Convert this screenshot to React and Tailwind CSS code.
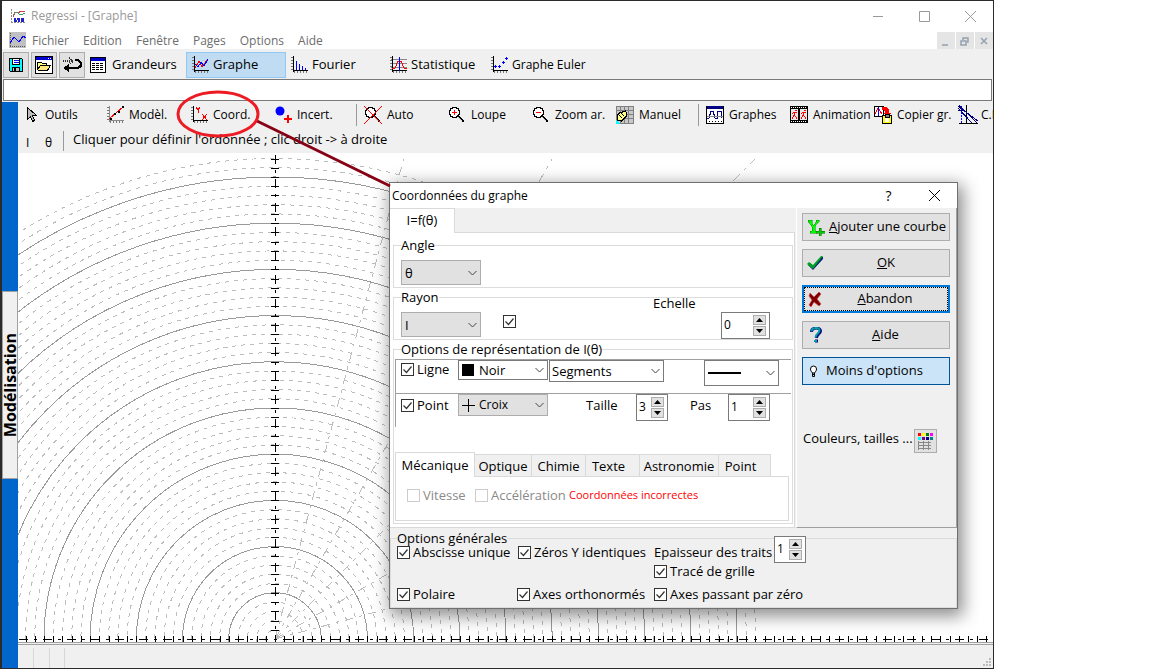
import React, { useState } from 'react';

const STEP = 9.24;

const Icon = ({ w = 18, h = 18, children }) => (
    <svg width={w} height={h} viewBox={`0 0 ${w} ${h}`} fill="none" shapeRendering="crispEdges" className="shrink-0" aria-hidden="true">
        {children}
    </svg>
);

// Graduated axes shared by most of the toolbar icons
const Axes = ({ color = '#000' }) => (
    <>
        <path d="M3.5 0V16M3 14.5H18" stroke={color} />
        <path d="M2 1v14" stroke="#777" strokeDasharray="1 2" strokeWidth="2" />
        <path d="M4 16h14" stroke="#777" strokeDasharray="1 2" strokeWidth="2" />
    </>
);

const AppIcon = () => (
    <Icon w={16} h={16}>
        <path d="M1.5 1v14M1 14.5h14" stroke="#888" strokeDasharray="2 1" />
        <path d="M3 9l2-5 3 1 3-2 4 0" stroke="#c44" />
        <path d="M3 7l3-3 5 3 4-2" stroke="#496" />
        <path d="M4 10.500h2m1 0h3m1 0h3M4 12.500h3m1 0h2m1 0h3" stroke="#22c" strokeWidth="2" />
    </Icon>
);

const ChildIcon = () => (
    <Icon w={17} h={16}>
        <path d="M0 0h17v16H0z" fill="#c0c0c0" />
        <path d="M1.5 1v14M1 14.5h15" stroke="#555" strokeDasharray="1 1" />
        <path d="M1 11l4-6 5 5 4-6 3 2" stroke="#00f" />
    </Icon>
);

const SaveIcon = () => (
    <Icon w={16} h={16}>
        <path d="M1.500 1.500h12l1 1v12h-12l-1-1z" fill="#0ff" stroke="#000" />
        <path d="M4.500 1.500h7v6h-7z" fill="#fff" stroke="#000" />
        <path d="M6 3.500h5M6 5.500h5" stroke="#00f" />
        <path d="M4.500 10.500h7v4h-7z" fill="#c0c0c0" stroke="#000" />
        <path d="M6 11h2v3H6z" fill="#000" />
    </Icon>
);

const OpenIcon = () => (
    <Icon>
        <path d="M.5.5h17v17H.5z" fill="#fff" stroke="#000" />
        <path d="M1 1h16v3H1z" fill="#00c" />
        <path d="M13 2.500h1m1 0h1" stroke="#fff" />
        <path d="M2.500 13.500v-7h4l1 1h4v3" fill="#ff8" stroke="#000" />
        <path d="M2.500 13.500l3-4h10l-3 5h-9z" fill="#ffe97a" stroke="#000" />
    </Icon>
);

const UndoIcon = () => (
    <Icon w={19} h={16}>
        <path d="M0 3.500h10M6 1l4 3-4 3" stroke="#333" strokeWidth="2" strokeDasharray="1 1" />
        <path d="M12 3h3l3 3v3l-3 2H4" stroke="#000" strokeWidth="2.500" />
        <path d="M0 11l6-4v8z" fill="#000" />
    </Icon>
);

const TableIcon = () => (
    <Icon w={16} h={16}>
        <path d="M.5.5h15v15H.5z" fill="#fff" stroke="#000" />
        <path d="M1 1h14v3H1z" fill="#00c" />
        <path d="M2 6.500h12M2 8.500h12M2 10.500h12M2 12.500h12" stroke="#000" strokeDasharray="3 1" />
    </Icon>
);

const GraphIcon = () => (
    <Icon>
        <Axes />
        <path d="M4 12l4-7 3 6 6-8" stroke="#f00" />
        <path d="M4 8l3 3 3-5 3 4 4-7" stroke="#00f" />
    </Icon>
);

const FourierIcon = () => (
    <Icon>
        <Axes />
        <path d="M6.500 5v9M9.500 8v6M12.500 10v4M15.500 12v2" stroke="#00f" />
    </Icon>
);

const StatIcon = () => (
    <Icon>
        <path d="M2 3.500h16M2 7.500h16M2 11.500h16" stroke="#888" />
        <Axes />
        <path d="M3 13l3-1 3-7h3l3 7 3 1" stroke="#f00" />
        <path d="M10.500 1v14" stroke="#00f" />
    </Icon>
);

const EulerIcon = () => (
    <Icon>
        <Axes />
        <path d="M4 10.500h3M5.500 9v3M8 10.500h3M9.500 9v3M12 6.500h3M13.500 5v3M15 2.500h3M16.500 1v3" stroke="#00f" />
    </Icon>
);

const PointerIcon = () => (
    <Icon>
        <path d="M5.500 1.500v12l3-3 2 5 2-1-2-5h4z" fill="#bbb" stroke="#000" />
    </Icon>
);

const ModelIcon = () => (
    <Icon w={19}>
        <Axes color="#888" />
        <path d="M3 13L17 1" stroke="#f00" />
        <path d="M4 12h2v2H4zM8 7h2v2H8zM12 5h2v2h-2zM16 0h2v2h-2z" fill="#000" />
    </Icon>
);

const CoordIcon = () => (
    <Icon w={19}>
        <Axes />
        <path d="M6 1l2 3 2-3M8.500 4v3M12 8l5 6M17 8l-5 6" stroke="#f00" />
    </Icon>
);

const IncertIcon = () => (
    <Icon w={19} h={20}>
        <circle cx="6" cy="6" r="4.500" fill="#00f" shapeRendering="auto" />
        <path d="M10 14h8M14 10v8" stroke="#f00" strokeWidth="2" />
    </Icon>
);

const Lens = () => (
    <>
        <circle cx="6.500" cy="6.500" r="5" fill="#fff" stroke="#000" strokeWidth="1.500" />
        <path d="M10 10l6 6" stroke="#000" strokeWidth="2.500" />
        <path d="M10 11l4 4" stroke="#ccc" />
    </>
);

const AutoIcon = () => (
    <Icon>
        <Lens />
        <path d="M0 0l18 18M18 0L0 18" stroke="#f00" />
    </Icon>
);

const ZoomInIcon = () => (
    <Icon>
        <Lens />
        <path d="M4 6.500h5M6.500 4v5" stroke="#f00" />
    </Icon>
);

const ZoomOutIcon = () => (
    <Icon>
        <Lens />
        <path d="M4 6.500h5" stroke="#f00" />
    </Icon>
);

const ManualIcon = () => (
    <Icon>
        <path d="M0 0h18v18H0z" fill="#c8c8c8" />
        <path d="M.5 0v18M4.500 0v18M8.500 0v18M12.500 0v18M17.500 0v18M0 .5h18M0 4.500h18M0 8.500h18M0 12.500h18M0 17.500h18" stroke="#808080" />
        <path d="M1.500 14V9l3-3h2l3-1 1 2v3l-5 5z" fill="#ff8" stroke="#000" />
        <path d="M3 9l3 3M5 7l3 3" stroke="#000" />
        <path d="M0 18v-4l4 4z" fill="#0ff" />
    </Icon>
);

const GraphsIcon = () => (
    <Icon>
        <path d="M.5.5h17v17H.5z" fill="#fff" stroke="#000" />
        <path d="M1 0h16v3H1z" fill="#000080" />
        <path d="M1 12h2l2-7h2l2 7h2V5.500h4V12" stroke="#000080" />
        <path d="M1 10.500h16" stroke="#888" />
        <path d="M3 15.500h13" stroke="#000" strokeDasharray="1 2" />
    </Icon>
);

const FilmIcon = () => (
    <Icon>
        <path d="M0 0h18v17H0z" fill="#000" />
        <path d="M1 1.500h16M1 15.500h16" stroke="#fff" strokeDasharray="1 1" />
        <path d="M1 3h7v11H1zM10 3h7v11h-7z" fill="#e8e8e8" />
        <path d="M5 4h2M2 8l2-2h3M5 6l-1 3 2 2v2M4 9l-2 4M14 4h2M11 8l2-2h3M14 6l-1 3 2 2v2M13 9l-2 4" stroke="#f00" />
    </Icon>
);

const CopyGraphIcon = () => (
    <Icon>
        <path d="M.5.5h9v10h-9z" fill="#fff" stroke="#000" />
        <path d="M1 8l3-6 4 6" stroke="#f00" />
        <path d="M4.500 1v9" stroke="#00f" />
        <path d="M8 1h4l3 3v3h3l-5 4-4-4h2V5L8 4z" fill="#f00" />
        <path d="M8.500 9.500h9v8h-9z" fill="#ff0" stroke="#000" />
        <path d="M11 8h4v3h-4z" fill="#888" stroke="#000" />
        <path d="M11 12h4v4h-4z" fill="#fff" />
    </Icon>
);

const RaysIcon = () => (
    <Icon w={20} h={20}>
        <path d="M3.500 1v17" stroke="#00f" strokeDasharray="2 1" />
        <path d="M8.500 0v18M1 18.500h19" stroke="#000" />
        <path d="M0 1l20 15M0 3l14 15M1 0l18 18M0 5h7" stroke="#000080" />
    </Icon>
);

const fileButtons = [
    { label: 'Enregistrer', icon: <SaveIcon /> },
    { label: 'Ouvrir', icon: <OpenIcon /> },
    { label: 'Annuler', icon: <UndoIcon /> },
];

const graphTools = [
    [
        { label: 'Outils', icon: <PointerIcon /> },
        { label: 'Modèl.', icon: <ModelIcon /> },
        { label: 'Coord.', icon: <CoordIcon /> },
        { label: 'Incert.', icon: <IncertIcon /> },
    ],
    [
        { label: 'Auto', icon: <AutoIcon /> },
        { label: 'Loupe', icon: <ZoomInIcon /> },
        { label: 'Zoom ar.', icon: <ZoomOutIcon /> },
        { label: 'Manuel', icon: <ManualIcon /> },
    ],
    [
        { label: 'Graphes', icon: <GraphsIcon /> },
        { label: 'Animation', icon: <FilmIcon /> },
        { label: 'Copier gr.', icon: <CopyGraphIcon /> },
        { label: 'C.I', icon: <RaysIcon /> },
    ],
];

const TitleBar = () => (
    <header className="flex h-[30px] items-center pl-2 text-xs text-[#999]">
        <AppIcon />
        <h1 className="ml-[5px]">Regressi - [Graphe]</h1>
        <div className="ml-auto flex items-center">
            {[
                ['Réduire', 'M0 5.500h10'],
                ['Agrandir', 'M.5.5h10v10H.5z'],
                ['Fermer', 'M0 0l11 11M11 0L0 11'],
            ].map(([label, d]) => (
                <button key={label} aria-label={label} className="flex w-[46px] justify-center">
                    <svg width="11" height="11" viewBox="0 0 11 11" fill="none" stroke="#999"><path d={d} /></svg>
                </button>
            ))}
        </div>
    </header>
);

const MenuBar = () => (
    <nav className="flex h-[18px] items-center pl-[7px] text-xs text-[#6d6d6d]">
        <ChildIcon />
        <div className="ml-1.5 flex gap-3.5 pt-0.5">
            {['Fichier', 'Edition', 'Fenêtre', 'Pages', 'Options', 'Aide'].map((m) => (
                <button key={m}>{m}</button>
            ))}
        </div>
        <div className="ml-auto flex gap-px pt-0.5">
            {[
                ['Réduire le graphe', 'M1 9h6'],
                ['Restaurer le graphe', 'M1 5h5v4H1zM3 4V2h5v4H7'],
                ['Fermer le graphe', 'M2 2l6 6M8 2L2 8'],
            ].map(([label, d]) => (
                <button key={label} aria-label={label} className="flex h-[18px] w-[18px] items-center justify-center bg-[#e5e5e5]">
                    <svg width="10" height="10" viewBox="0 0 10 10" fill="none" stroke="#93a1b0" strokeWidth="1.500"><path d={d} /></svg>
                </button>
            ))}
        </div>
    </nav>
);

const MainToolbar = () => (
    <div className="flex h-[30px] items-center bg-[#f0f0f0] pt-0.5 pl-px text-[13px]">
        <div className="flex gap-0.5">
            {fileButtons.map((b) => (
                <button key={b.label} aria-label={b.label} className="flex h-[26px] w-[26px] items-center justify-center border border-[#adadad] bg-[#e1e1e1]">
                    {b.icon}
                </button>
            ))}
        </div>
        <button className="ml-[5px] flex w-24 items-center gap-1.5"><TableIcon />Grandeurs</button>
        <button className="flex h-[26px] w-[100px] items-center gap-1 border border-[#90c8f6] bg-[#c0dcf3] pl-1"><GraphIcon />Graphe</button>
        <button className="ml-1 flex w-[99px] items-center gap-1"><FourierIcon />Fourier</button>
        <button className="flex w-[101px] items-center gap-1"><StatIcon />Statistique</button>
        <button className="flex items-center gap-1 text-xs"><EulerIcon />Graphe Euler</button>
    </div>
);

const GraphToolbar = () => (
    <div className="bg-[#f0f0f0]">
        <div className="flex h-[26px] items-center overflow-hidden pl-1 text-xs">
            {graphTools.map((group, i) => (
                <div key={i} className={i ? 'flex items-center border-l border-[#999] pl-[7px] -ml-0.5 h-[22px]' : 'flex items-center'}>
                    {group.map((t) => (
                        <button key={t.label} className="flex w-[84px] shrink-0 items-center whitespace-nowrap">
                            <span className="flex w-[23px]">{t.icon}</span>
                            {t.label}
                        </button>
                    ))}
                </div>
            ))}
        </div>
        <div className="flex h-[25px] items-center pl-2 text-[13px]">
            <span className="w-[19px] pt-1 text-xs">I</span>
            <span className="w-[18px] pt-1 text-xs">θ</span>
            <p className="border-l border-[#999] pb-1 pl-[9px] leading-4">Cliquer pour définir l'ordonnée ; clic droit -&gt; à droite</p>
        </div>
    </div>
);

const cx = 257;
const cy = 486;
const rings = Array.from({ length: 52 }, (_, i) => i + 1);
const xTicks = Array.from({ length: 105 }, (_, i) => i - 27);

const PolarGraph = () => (
    <svg className="block min-h-0 w-full flex-1" fill="none" shapeRendering="crispEdges" role="img" aria-label="Graphe polaire">
        {rings.map((n) => (
            <circle
                key={n}
                cx={cx}
                cy={cy}
                r={n * STEP}
                stroke={n % 5 ? '#bdbdbd' : '#9a9a9a'}
                strokeDasharray={n % 5 ? '4 5' : undefined}
            />
        ))}
        {[15, 30, 45, 60, 75].map((a) => {
            const t = (a * Math.PI) / 180;
            const len = 480 / Math.max(Math.sin(t), Math.cos(t));
            return <line key={a} x1={cx} y1={cy} x2={cx + len * Math.sin(t)} y2={cy - len * Math.cos(t)} stroke="#bdbdbd" strokeDasharray="9 6 3 6" />;
        })}
        <path d="M257.500 2v484M1 486.500h974" stroke="#000" strokeDasharray="9 6 3 6" />
        {rings.map((n) => (
            <path key={n} d={`M253 ${Math.round(cy - n * STEP)}.5h8`} stroke="#000" />
        ))}
        {xTicks.map((n) => (
            <path key={n} d={`M${Math.round(cx + n * STEP)}.5 483v7`} stroke="#000" />
        ))}
    </svg>
);

const Check = ({ label, defaultChecked, disabled, className = '' }) => (
    <label className={`flex items-center gap-[3px] leading-4 whitespace-nowrap ${disabled ? 'text-[#8a8a8a]' : ''} ${className}`}>
        <span className="relative h-[13px] w-[13px] shrink-0">
            <input
                type="checkbox"
                defaultChecked={defaultChecked}
                disabled={disabled}
                aria-label={label || 'Echelle automatique'}
                className="peer block h-[13px] w-[13px] appearance-none border border-[#333] bg-white disabled:border-[#ccc]"
            />
            <svg className="pointer-events-none absolute inset-0 hidden peer-checked:block" width="13" height="13" viewBox="0 0 13 13" fill="none" stroke="#333" strokeWidth="1.200">
                <path d="M2.500 6.500l3 3 5-6" />
            </svg>
        </span>
        {label}
    </label>
);

const Select = ({ label, options, pad = 'pl-[3px]', className = '', children }) => (
    <div className={`relative ${className}`}>
        <select aria-label={label} className={`block h-full w-full appearance-none border border-inherit bg-inherit leading-4 ${pad}`}>
            {options.map((o) => <option key={o}>{o}</option>)}
        </select>
        <span className="pointer-events-none absolute inset-y-0 left-1 flex items-center">{children}</span>
        <svg className="pointer-events-none absolute top-1/2 right-1 -mt-1" width="9" height="8" viewBox="0 0 9 8" fill="none" stroke="#444">
            <path d="M.5 2l4 4 4-4" />
        </svg>
    </div>
);

const Spinner = ({ label, start, className = '' }) => {
    const [value, setValue] = useState(start);

    return (
        <div className={`flex h-[27px] items-center border border-[#7a7a7a] bg-white pr-[3px] ${className}`}>
            <input
                aria-label={label}
                value={value}
                onChange={(e) => setValue(Number(e.target.value) || 0)}
                className="min-w-0 flex-1 pb-0.5 pl-0.5 text-xs outline-none"
            />
            <div className="flex flex-col gap-px">
                <button aria-label={`${label} plus`} onClick={() => setValue(value + 1)} className="flex h-2.5 w-[13px] items-center justify-center border border-[#adadad] bg-[#e1e1e1]">
                    <svg width="7" height="4" viewBox="0 0 7 4"><path d="M0 4h7L3.500 0z" /></svg>
                </button>
                <button aria-label={`${label} moins`} onClick={() => setValue(value - 1)} className="flex h-2.5 w-[13px] items-center justify-center border border-[#adadad] bg-[#e1e1e1]">
                    <svg width="7" height="4" viewBox="0 0 7 4"><path d="M0 0h7L3.500 4z" /></svg>
                </button>
            </div>
        </div>
    );
};

const CurveOptions = () => (
    <div className="flex min-w-0 flex-1 flex-col">
        <div className="flex h-[25px] pr-px">
            <button className="w-[65px] border-t border-r border-[#d9d9d9] bg-white">I=f(θ)</button>
            <div className="flex-1 border-b border-[#d9d9d9]" />
        </div>
        <div className="mr-px flex flex-1 flex-col gap-px border-r border-b border-[#d9d9d9] bg-white pt-1 pr-px pb-[3px] pl-[3px]">
            <fieldset className="h-[51px] min-w-0 border border-[#dcdcdc] px-[7px]">
                <legend className="h-4 leading-4">Angle</legend>
                <Select label="Angle" options={['θ', 'I']} className="mt-[7px] h-[25px] w-20 border-[#adadad] bg-[#e1e1e1]" />
            </fieldset>
            <fieldset className="h-[51px] min-w-0 border border-[#dcdcdc] px-[7px]">
                <legend className="h-4 leading-4">Rayon</legend>
                <div className="flex items-start">
                    <Select label="Rayon" options={['I', 'θ']} className="mt-[7px] h-[25px] w-20 border-[#adadad] bg-[#e1e1e1]" />
                    <Check defaultChecked className="mt-2.5 ml-[22px]" />
                    <span className="-mt-2.5 ml-auto w-[68px] leading-4">Echelle</span>
                    <Spinner label="Echelle" start={0} className="mt-[7px] mr-[15px] w-[49px]" />
                </div>
            </fieldset>
            <fieldset className="min-w-0 flex-1 border border-[#dcdcdc] px-px">
                <legend className="ml-1.5 h-4 leading-4">Options de représentation de I(θ)</legend>
                <div className="mt-0.5 border-l border-[#a0a0a0]">
                    <div className="flex h-[34px] items-start border-t border-[#a0a0a0] pl-[5px]">
                        <Check label="Ligne" defaultChecked className="mt-px w-[57px]" />
                        <Select label="Couleur" options={['Noir', 'Rouge', 'Bleu']} pad="pl-5" className="h-5 w-[90px] border-[#7a7a7a] bg-white">
                            <span className="h-3 w-3 bg-black" />
                        </Select>
                        <Select label="Type de ligne" options={['Segments', 'Splines']} pad="pl-0.5" className="ml-px h-[22px] w-[115px] border-[#7a7a7a] bg-white" />
                        <Select label="Trait" options={[' ']} className="mr-3 ml-auto h-[26px] w-[75px] border-[#7a7a7a] bg-white">
                            <span className="h-0.5 w-[33px] bg-black" />
                        </Select>
                    </div>
                    <div className="flex h-[34px] items-start border-t border-[#a0a0a0] pl-[5px]">
                        <Check label="Point" defaultChecked className="mt-[3px] w-[57px]" />
                        <Select label="Motif" options={['Croix', 'Cercle']} pad="pl-5" className="h-[22px] w-[90px] border-[#adadad] bg-[#e1e1e1] text-xs">
                            <svg width="13" height="13" viewBox="0 0 13 13" stroke="#000"><path d="M6.500 0v13M0 6.500h13" /></svg>
                        </Select>
                        <span className="mt-[3px] ml-auto w-[50px] leading-4">Taille</span>
                        <Spinner label="Taille" start={3} className="w-8" />
                        <span className="mt-[3px] ml-[22px] w-[38px] leading-4">Pas</span>
                        <Spinner label="Pas" start={1} className="mr-[21px] w-[42px]" />
                    </div>
                </div>
                <div className="mt-[25px] flex items-end leading-4" role="tablist">
                    <button role="tab" aria-selected="true" className="-mb-px h-[25px] w-20 border border-b-0 border-[#d9d9d9] bg-white">Mécanique</button>
                    <button role="tab" className="h-[22px] w-[57px] border-t border-r border-[#d9d9d9] bg-[#f0f0f0]">Optique</button>
                    <button role="tab" className="h-[22px] w-[54px] border-t border-r border-[#d9d9d9] bg-[#f0f0f0]">Chimie</button>
                    <button role="tab" className="h-[22px] w-[54px] border-t border-r border-[#d9d9d9] bg-[#f0f0f0] pr-2">Texte</button>
                    <button role="tab" className="h-[22px] w-[79px] border-t border-r border-[#d9d9d9] bg-[#f0f0f0]">Astronomie</button>
                    <button role="tab" className="h-[22px] w-[52px] border-t border-r border-[#d9d9d9] bg-[#f0f0f0] pr-2">Point</button>
                </div>
                <div className="mr-0.5 flex h-[45px] items-start border border-[#d9d9d9] pt-[10px] pl-[11px]">
                    <Check label="Vitesse" disabled className="w-[68px]" />
                    <Check label="Accélération" disabled className="w-[94px]" />
                    <p className="text-[11px] leading-4 whitespace-nowrap text-[#ff0000]">Coordonnées incorrectes</p>
                </div>
            </fieldset>
        </div>
    </div>
);

const sideButton = 'relative flex h-7 w-full items-center justify-center border border-[#adadad] bg-[#e1e1e1]';

const Actions = () => (
    <div className="flex w-[161px] flex-col gap-2 border-r border-b border-l border-[#a0a0a0] border-l-white pt-[5px] pr-1.5 pl-[5px]">
        <button className={`${sideButton} gap-1 pl-px whitespace-nowrap`}>
            <svg width="18" height="17" viewBox="0 0 18 17" shapeRendering="crispEdges" aria-hidden="true">
                <path d="M1 1h4v2l1 3h1l2-3V1h3v2h-1L8 8v4h2v2H3v-2h2V8L2 3H1z" fill="#0f0" stroke="#080" strokeWidth=".5" />
                <path d="M12 9h2v3h4v2h-4v3h-2v-3H9v-2h3z" fill="#0c0" stroke="#060" strokeWidth=".5" />
            </svg>
            <span><u>A</u>jouter une courbe</span>
        </button>
        <button className={`${sideButton} pl-5`}>
            <svg className="absolute left-1" width="17" height="15" viewBox="0 0 17 15" aria-hidden="true">
                <path d="M1 9l2-2 3 3 8-9 2 0v2L6 14z" fill="#0a1a80" />
                <path d="M0 8l2-2 4 3 8-9h2L6 13z" fill="#00a020" />
            </svg>
            <span><u>O</u>K</span>
        </button>
        <button className="relative flex h-7 w-full items-center justify-center border-2 border-[#0078d7] bg-[#e1e1e1] pl-[18px] outline-1 -outline-offset-3 outline-dotted outline-black">
            <svg className="absolute left-1" width="15" height="15" viewBox="0 0 15 15" aria-hidden="true">
                <path d="M2 1l4 4 5-5 2 2-4 5 4 5-2 2-5-4-3 5-2-2 3-5-3-4z" fill="#800000" stroke="#c44" strokeWidth=".6" />
            </svg>
            <span><u>A</u>bandon</span>
        </button>
        <button className={`${sideButton} pl-[19px]`}>
            <svg className="absolute left-[7px]" width="12" height="16" viewBox="0 0 12 16" fill="none" aria-hidden="true">
                <path d="M1.500 5c0-5 9-5 9-1 0 3-4 3-4 7M5 14h3" stroke="#000080" strokeWidth="3" />
                <path d="M1.500 4.500c0-4 8-5 8-1 0 3-4 3-4 7M4 14h3" stroke="#00a0a8" strokeWidth="2" />
            </svg>
            <span><u>A</u>ide</span>
        </button>
        <button className="flex h-7 w-full items-center gap-2 border border-[#005499] bg-[#cce4f7] pl-1.5">
            <svg width="9" height="13" viewBox="0 0 9 13" fill="none" stroke="#000" aria-hidden="true">
                <path d="M3.500 8C2 6 1.500 5.500 1.500 4a3 3 0 0 1 6 0c0 1.500-.5 2-2 4z" fill="#fff" />
                <path d="M3.500 8v3.500h2V8M3 9.500h3" />
            </svg>
            Moins d'options
        </button>
        <div className="mt-9 flex items-center whitespace-nowrap">
            <span className="w-28 pb-1.5 pl-px leading-4">Couleurs, tailles ...</span>
            <button aria-label="Couleurs" className="flex h-6 w-[23px] items-center justify-center border border-[#adadad] bg-[#e1e1e1]">
                <Icon w={16}>
                    <path d="M0 1h3v3H0z" fill="#f00" /><path d="M4 1h3v3H4z" fill="#ff0" />
                    <path d="M8 1h3v3H8z" fill="#008000" /><path d="M12 1h3v3h-3z" fill="#f0f" />
                    <path d="M0 5h3v3H0z" fill="#0ff" /><path d="M4 5h3v3H4z" fill="#800080" />
                    <path d="M8 5h3v3H8z" fill="#000080" /><path d="M12 5h3v3h-3z" fill="#008080" />
                    <path d="M.5 9v9M5.500 9v9M10.500 9v9M0 10.500h13M0 13.500h13M0 16.500h13" stroke="#888" />
                </Icon>
            </button>
        </div>
    </div>
);

const GeneralOptions = () => (
    <fieldset className="mt-0.5 h-[78px] min-w-0 border border-[#dcdcdc] pr-2 pl-1.5">
        <legend className="h-4 leading-4">Options générales</legend>
        <div className="-mt-0.5 grid grid-cols-[121px_136px_120px_auto] items-start">
            <Check label="Abscisse unique" defaultChecked />
            <Check label="Zéros Y identiques" defaultChecked />
            <span className="leading-4 whitespace-nowrap">Epaisseur des traits</span>
            <Spinner label="Epaisseur des traits" start={1} className="-mt-2 w-8" />
            <Check label="Tracé de grille" defaultChecked className="col-start-3" />
        </div>
        <div className="mt-[7px] grid grid-cols-[120px_137px_auto]">
            <Check label="Polaire" defaultChecked />
            <Check label="Axes orthonormés" defaultChecked />
            <Check label="Axes passant par zéro" defaultChecked />
        </div>
    </fieldset>
);

const CoordinatesDialog = () => (
    <section role="dialog" aria-label="Coordonnées du graphe" className="absolute top-[182px] left-[389px] flex w-[569px] flex-col border border-[#707070] bg-[#f0f0f0] text-[13px] text-black shadow-[3px_5px_16px_2px_rgba(0,0,0,0.45)]">
        <header className="flex h-[25px] items-center bg-white pl-0.5">
            <h2 className="text-xs">Coordonnées du graphe</h2>
            <button aria-label="Aide contextuelle" className="ml-auto w-[45px] text-sm">?</button>
            <button aria-label="Fermer" className="flex w-[46px] justify-center">
                <svg width="11" height="11" viewBox="0 0 11 11" stroke="#000"><path d="M0 0l11 11M11 0L0 11" /></svg>
            </button>
        </header>
        <div className="flex h-80">
            <CurveOptions />
            <Actions />
        </div>
        <GeneralOptions />
    </section>
);

const App = () => (
    <div className="relative h-screen bg-white pr-[158px] font-['Open_Sans','Noto_Sans',sans-serif] text-black">
        <main className="flex h-full flex-col border border-l-2 border-[#2b2b2b] bg-white">
            <TitleBar />
            <MenuBar />
            <MainToolbar />
            <div className="bg-[#f0f0f0] px-px pb-px">
                <input aria-label="Expression" className="block h-[22px] w-full border border-[#7a7a7a] bg-white px-1 text-xs outline-none" />
            </div>
            <div className="flex min-h-0 flex-1">
                <aside className="w-4 shrink-0 bg-[#0066cc] pt-[189px]">
                    <button className="flex h-[188px] w-4 items-center justify-center border border-[#a0a0a0] bg-[#f0f0f0]">
                        <span className="rotate-180 text-base leading-4 font-bold [writing-mode:vertical-rl]">Modélisation</span>
                    </button>
                </aside>
                <div className="flex min-w-0 flex-1 flex-col">
                    <GraphToolbar />
                    <PolarGraph />
                    <footer className="flex h-[26px] shrink-0 items-end border-t border-[#a0a0a0] bg-[#f0f0f0]">
                        <div className="flex h-6 w-full items-end border-t border-[#a0a0a0] pl-[15px]">
                            <span className="h-5 w-4 border-l border-[#d7d7d7]" />
                            <span className="h-5 w-4 border-x border-[#d7d7d7]" />
                            <svg className="ml-auto" width="10" height="10" viewBox="0 0 10 10" fill="#bbb"><path d="M6 0h2v2H6zM3 3h2v2H3zM6 3h2v2H6zM0 6h2v2H0zM3 6h2v2H3zM6 6h2v2H6z" /></svg>
                        </div>
                    </footer>
                </div>
            </div>
        </main>
        <CoordinatesDialog />
        {/* hand-drawn pointer from the Coord. button to its dialog */}
        <svg className="pointer-events-none absolute top-0 left-0" width="400" height="200" fill="none" strokeWidth="3" aria-hidden="true">
            <path d="M257 121l133 65" stroke="#880015" />
            <ellipse cx="218" cy="114" rx="40" ry="22" stroke="#ed1c24" />
        </svg>
    </div>
);

export default App;
